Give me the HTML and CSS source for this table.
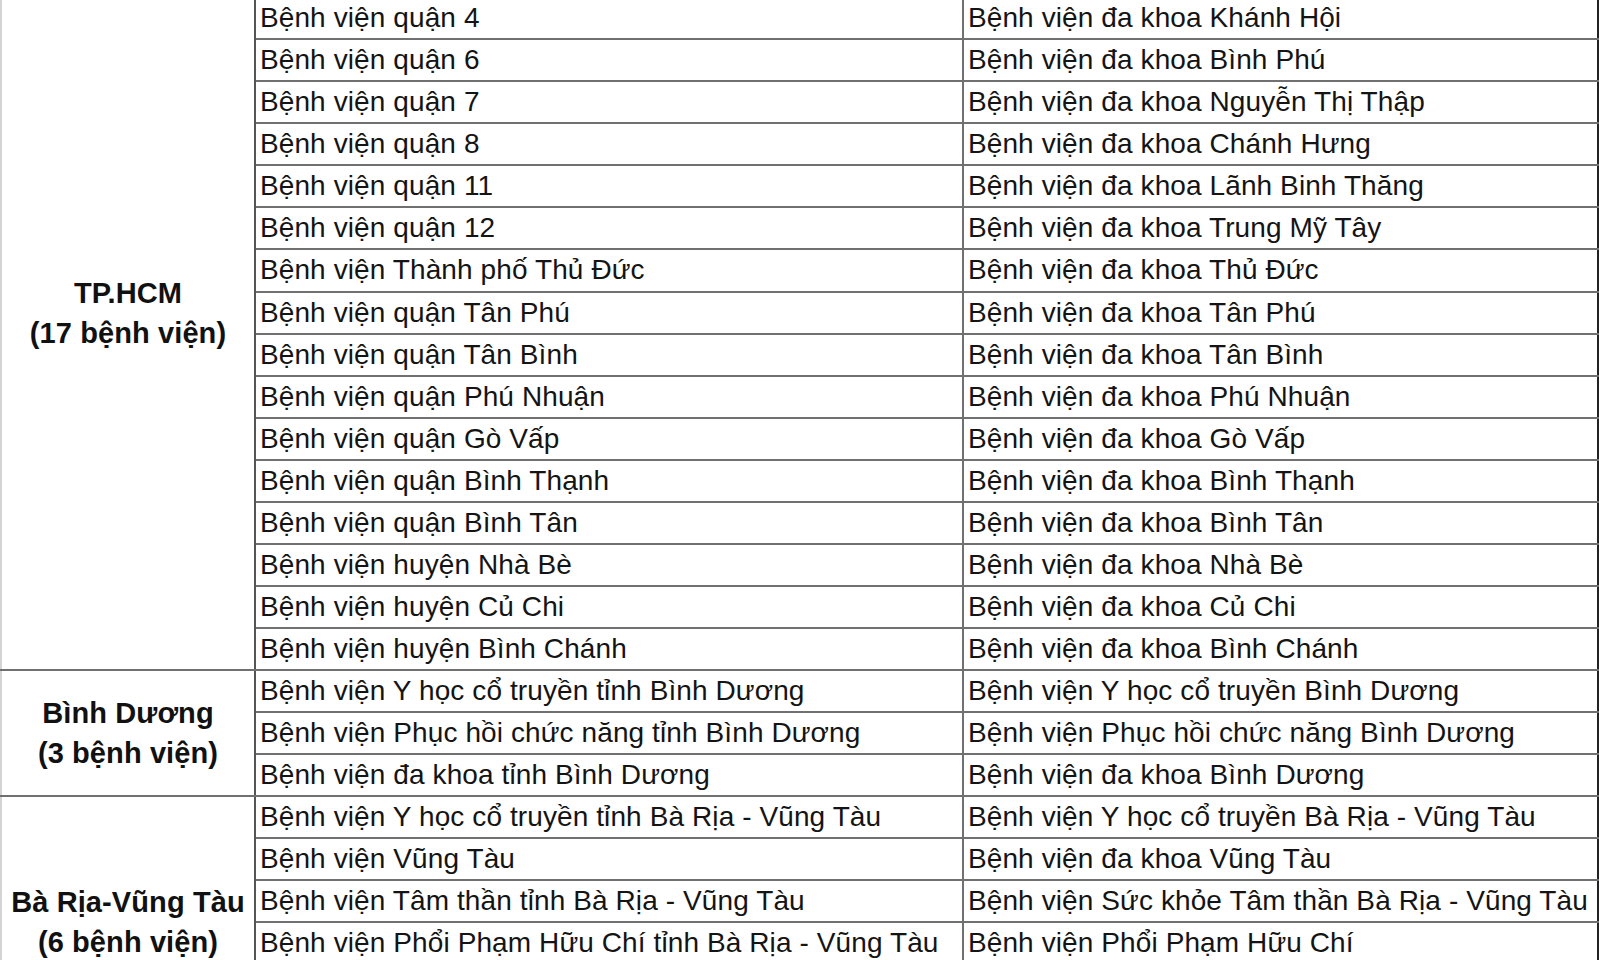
FILE: index.html
```html
<!DOCTYPE html>
<html lang="vi">
<head>
<meta charset="utf-8">
<link rel="stylesheet" href="styles.css">
</head>
<body>
<table class="list">
  <colgroup>
    <col class="c-region">
    <col class="c-old">
    <col class="c-new">
  </colgroup>
  <tbody>
    <tr>
      <td class="region" rowspan="17"><div class="label">TP.HCM<br>(17 bệnh viện)</div></td>
      <td>Bệnh viện quận 2</td><td>Bệnh viện đa khoa Thủ Thiêm</td>
    </tr>
    <tr><td>Bệnh viện quận 4</td><td>Bệnh viện đa khoa Khánh Hội</td></tr>
    <tr><td>Bệnh viện quận 6</td><td>Bệnh viện đa khoa Bình Phú</td></tr>
    <tr><td>Bệnh viện quận 7</td><td>Bệnh viện đa khoa Nguyễn Thị Thập</td></tr>
    <tr><td>Bệnh viện quận 8</td><td>Bệnh viện đa khoa Chánh Hưng</td></tr>
    <tr><td>Bệnh viện quận 11</td><td>Bệnh viện đa khoa Lãnh Binh Thăng</td></tr>
    <tr><td>Bệnh viện quận 12</td><td>Bệnh viện đa khoa Trung Mỹ Tây</td></tr>
    <tr><td>Bệnh viện Thành phố Thủ Đức</td><td>Bệnh viện đa khoa Thủ Đức</td></tr>
    <tr><td>Bệnh viện quận Tân Phú</td><td>Bệnh viện đa khoa Tân Phú</td></tr>
    <tr><td>Bệnh viện quận Tân Bình</td><td>Bệnh viện đa khoa Tân Bình</td></tr>
    <tr><td>Bệnh viện quận Phú Nhuận</td><td>Bệnh viện đa khoa Phú Nhuận</td></tr>
    <tr><td>Bệnh viện quận Gò Vấp</td><td>Bệnh viện đa khoa Gò Vấp</td></tr>
    <tr><td>Bệnh viện quận Bình Thạnh</td><td>Bệnh viện đa khoa Bình Thạnh</td></tr>
    <tr><td>Bệnh viện quận Bình Tân</td><td>Bệnh viện đa khoa Bình Tân</td></tr>
    <tr><td>Bệnh viện huyện Nhà Bè</td><td>Bệnh viện đa khoa Nhà Bè</td></tr>
    <tr><td>Bệnh viện huyện Củ Chi</td><td>Bệnh viện đa khoa Củ Chi</td></tr>
    <tr><td>Bệnh viện huyện Bình Chánh</td><td>Bệnh viện đa khoa Bình Chánh</td></tr>
    <tr>
      <td class="region" rowspan="3"><div class="label">Bình Dương<br>(3 bệnh viện)</div></td>
      <td>Bệnh viện Y học cổ truyền tỉnh Bình Dương</td><td>Bệnh viện Y học cổ truyền Bình Dương</td>
    </tr>
    <tr><td>Bệnh viện Phục hồi chức năng tỉnh Bình Dương</td><td>Bệnh viện Phục hồi chức năng Bình Dương</td></tr>
    <tr><td>Bệnh viện đa khoa tỉnh Bình Dương</td><td>Bệnh viện đa khoa Bình Dương</td></tr>
    <tr>
      <td class="region" rowspan="6"><div class="label">Bà Rịa-Vũng Tàu<br>(6 bệnh viện)</div></td>
      <td>Bệnh viện Y học cổ truyền tỉnh Bà Rịa - Vũng Tàu</td><td>Bệnh viện Y học cổ truyền Bà Rịa - Vũng Tàu</td>
    </tr>
    <tr><td>Bệnh viện Vũng Tàu</td><td>Bệnh viện đa khoa Vũng Tàu</td></tr>
    <tr><td>Bệnh viện Tâm thần tỉnh Bà Rịa - Vũng Tàu</td><td>Bệnh viện Sức khỏe Tâm thần Bà Rịa - Vũng Tàu</td></tr>
    <tr><td>Bệnh viện Phổi Phạm Hữu Chí tỉnh Bà Rịa - Vũng Tàu</td><td>Bệnh viện Phổi Phạm Hữu Chí</td></tr>
    <tr><td>Bệnh viện Bà Rịa</td><td>Bệnh viện đa khoa Bà Rịa</td></tr>
    <tr><td>Bệnh viện Mắt tỉnh Bà Rịa - Vũng Tàu</td><td>Bệnh viện Mắt Bà Rịa - Vũng Tàu</td></tr>
  </tbody>
</table>
</body>
</html>
```

FILE: styles.css
```css
html, body {
  margin: 0;
  padding: 0;
  background: #ffffff;
  overflow: hidden;
}

.list {
  margin-top: -46px;
  width: 1597px;
  border-collapse: collapse;
  table-layout: fixed;
  font-family: "Liberation Sans", Arial, sans-serif;
  color: #141414;
}

.c-region { width: 254px; }
.c-old { width: 708px; }
.c-new { width: 635px; }

.list td {
  height: 40.07px;
  padding: 0 0 0 4px;
  border: 2px solid #707070;
  font-size: 28px;
  letter-spacing: 0.1px;
  line-height: 40px;
  white-space: nowrap;
  overflow: hidden;
  vertical-align: middle;
}

.list td:last-child {
  border-right-color: #222;
}

.list td.region {
  padding: 0;
  text-align: center;
  border-left: 2px solid #d4d4d4;
  border-right-color: #555;
}

.label {
  font-weight: bold;
  font-size: 29px;
  line-height: 40px;
  color: #111;
}
```
